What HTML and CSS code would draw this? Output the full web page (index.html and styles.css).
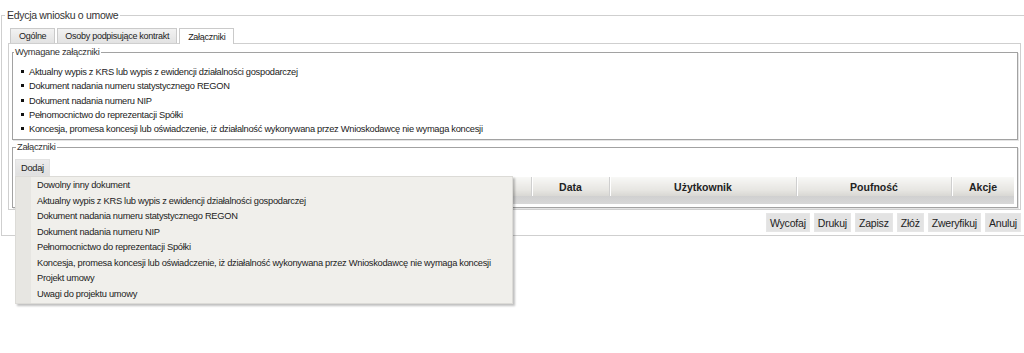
FILE: index.html
```html
<!DOCTYPE html>
<html lang="pl">
<head>
  <meta charset="UTF-8" />
  <title>Edycja wniosku o umowe</title>
  <link rel="stylesheet" href="styles.css">
</head>
<body>
  <div class="frame">
    <div class="frame-title">Edycja wniosku o umowe</div>

    <div class="tabs">
      <button class="tab">Ogólne</button>
      <button class="tab">Osoby podpisujące kontrakt</button>
      <button class="tab active">Załączniki</button>
    </div>

    <div class="tab-body">
      <fieldset class="group">
        <legend>Wymagane załączniki</legend>
        <ul class="req-list">
          <li>Aktualny wypis z KRS lub wypis z ewidencji działalności gospodarczej</li>
          <li>Dokument nadania numeru statystycznego REGON</li>
          <li>Dokument nadania numeru NIP</li>
          <li>Pełnomocnictwo do reprezentacji Spółki</li>
          <li>Koncesja, promesa koncesji lub oświadczenie, iż działalność wykonywana przez Wnioskodawcę nie wymaga koncesji</li>
        </ul>
      </fieldset>

      <fieldset class="group files">
        <legend>Załączniki</legend>
        <div class="add-wrap">
          <button class="add-btn">Dodaj</button>
          <ul class="menu">
            <li>Dowolny inny dokument</li>
            <li>Aktualny wypis z KRS lub wypis z ewidencji działalności gospodarczej</li>
            <li>Dokument nadania numeru statystycznego REGON</li>
            <li>Dokument nadania numeru NIP</li>
            <li>Pełnomocnictwo do reprezentacji Spółki</li>
            <li>Koncesja, promesa koncesji lub oświadczenie, iż działalność wykonywana przez Wnioskodawcę nie wymaga koncesji</li>
            <li>Projekt umowy</li>
            <li>Uwagi do projektu umowy</li>
          </ul>
        </div>
        <table class="grid">
          <thead>
            <tr>
              <th class="c-type"></th>
              <th class="c-file"></th>
              <th class="c-date">Data</th>
              <th class="c-user">Użytkownik</th>
              <th class="c-conf">Poufność</th>
              <th class="c-act">Akcje</th>
            </tr>
          </thead>
        </table>
        <div class="grid-foot"></div>
      </fieldset>
    </div>

    <div class="actions">
      <button>Wycofaj</button>
      <button>Drukuj</button>
      <button>Zapisz</button>
      <button>Złóż</button>
      <button>Zweryfikuj</button>
      <button>Anuluj</button>
    </div>
  </div>
</body>
</html>
```

FILE: styles.css
```css
html, body {
  min-height: 100vh;
}
body {
  margin: 0;
  font-family: "Liberation Sans", Arial, sans-serif;
  font-size: 9.3px;
  letter-spacing: -0.28px;
  color: #222;
  background: #fff;
}
button {
  font-family: inherit;
  font-size: inherit;
  letter-spacing: inherit;
  color: #222;
  cursor: pointer;
}
fieldset {
  margin: 0;
  min-width: 0;
}
legend {
  line-height: 13px;
}

/* outer frame */
.frame {
  margin: 15px 0 0 1px;
  border: 1px solid #cfcfcf;
  border-right: none;
  padding: 0 3px 3px 6px;
}
.frame-title {
  display: table;
  margin: -8px 0 6px -3px;
  padding: 0 2px;
  background: #fff;
  font-size: 10.5px;
  letter-spacing: -0.3px;
  line-height: 14px;
  color: #333;
}

/* tabs */
.tabs {
  display: flex;
  gap: 2px;
  padding-left: 2px;
}
.tab {
  height: 15px;
  padding: 0 7px;
  border: 1px solid #cacaca;
  border-bottom: none;
  background: linear-gradient(#f2f2f2, #e2e2e2);
  font-size: 9px;
  line-height: 14px;
}
.tab:first-child {
  padding: 0 8px;
}
.tab.active {
  background: #fff;
  height: 16px;
  margin-bottom: -1px;
  padding: 0 8px;
  position: relative;
}
.tab-body {
  border: 1px solid #cfcfcf;
  padding: 2px 2px 1px 3px;
}

/* group boxes */
.group {
  border: 1px solid #a2a2a2;
  box-shadow: 1px 1px 0 #e4e4e4;
  padding: 0 3px 3px 0;
}
.group > legend {
  color: #333;
  padding: 0 1px;
  margin-left: 1px;
}
.group.files {
  margin-top: 1px;
  padding: 5px 3px 3px 2px;
}

.req-list {
  list-style: none;
  margin: 0;
  padding: 6px 0 0 8px;
}
.req-list li {
  line-height: 14.25px;
  white-space: nowrap;
}
.req-list li::before {
  content: "";
  display: inline-block;
  width: 3px;
  height: 3px;
  background: #111;
  margin: 0 5px 2px 0;
  vertical-align: middle;
}

/* add button + dropdown */
.add-wrap {
  position: relative;
  height: 17px;
}
.add-btn {
  height: 17px;
  padding: 0 5px;
  border: 1px solid #e2e2e2;
  background: linear-gradient(#ececec, #e0e0e0);
}
.menu {
  position: absolute;
  top: 17px;
  left: 0;
  z-index: 5;
  width: 496px;
  margin: 0;
  padding: 1px 0;
  list-style: none;
  background: linear-gradient(to right, #e7e6e2 0, #e7e6e2 15px, #f0efeb 15px);
  border: 1px solid #dcdbd7;
  box-shadow: 2px 2px 2px rgba(0, 0, 0, 0.25);
}
.menu li {
  line-height: 15.5px;
  padding-left: 21px;
  white-space: nowrap;
}

/* grid */
.grid {
  width: 100%;
  table-layout: fixed;
  border-collapse: collapse;
  margin-top: 1px;
}
.grid th {
  height: 19px;
  padding: 0;
  font-size: 10.5px;
  letter-spacing: 0;
  font-weight: bold;
  text-align: center;
  background: linear-gradient(#f8f8f6, #e6e5e1 70%, #d8d7d3);
  border-left: 1px solid #cfcfcf;
  box-shadow: inset 1px 0 0 #fff;
  overflow: hidden;
  white-space: nowrap;
}
.grid th:first-child {
  border-left: none;
}
.c-type { width: 300px; }
.c-file { width: 215px; }
.c-date { width: 77px; }
.c-user { width: 186px; }
.c-conf { width: 154px; }
.c-act { width: auto; }
.grid-foot {
  height: 8px;
  background: linear-gradient(#d0d0d0, #d8d8d8);
}

/* bottom actions */
.actions {
  display: flex;
  justify-content: flex-end;
  gap: 4px;
  margin-top: 3px;
}
.actions button {
  height: 19px;
  padding: 0 3px;
  font-size: 10.5px;
  letter-spacing: -0.2px;
  border: 1px solid #e6e6e6;
  background: #e3e3e3;
}
```
